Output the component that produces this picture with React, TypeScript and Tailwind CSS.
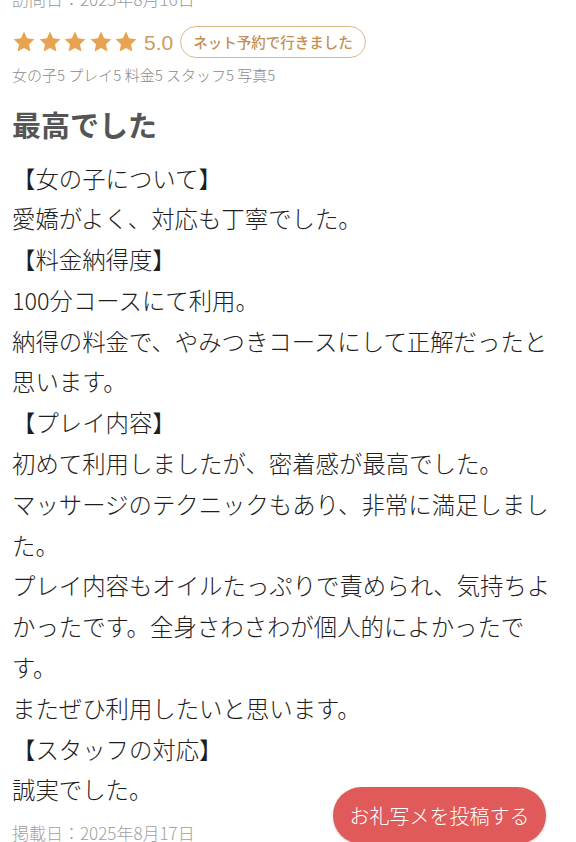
import React from "react";

const Star = () => (
  <svg width="24" height="24" viewBox="0 0 24 24" className="shrink-0">
    <path
      d="M12 1.6l3.1 6.7 7.3.9-5.4 5 1.4 7.2L12 17.9l-6.4 3.5 1.4-7.2-5.4-5 7.3-.9z"
      fill="#e8a352"
    />
  </svg>
);

const lines = [
  "【女の子について】",
  "愛嬌がよく、対応も丁寧でした。",
  "【料金納得度】",
  "100分コースにて利用。",
  "納得の料金で、やみつきコースにして正解だったと思います。",
  "【プレイ内容】",
  "初めて利用しましたが、密着感が最高でした。",
  "マッサージのテクニックもあり、非常に満足しました。",
  "プレイ内容もオイルたっぷりで責められ、気持ちよかったです。全身さわさわが個人的によかったです。",
  "またぜひ利用したいと思います。",
  "【スタッフの対応】",
  "誠実でした。",
];

export default function App() {
  return (
    <div
      className="relative w-[576px] h-[842px] overflow-hidden bg-white"
      style={{ fontFamily: '"Noto Sans CJK JP", "Noto Sans", sans-serif' }}
    >
      <div className="px-3 -mt-[11.5px] flex flex-col">
        <div className="text-[17px] leading-[20px] font-light text-[#9a9a9a]">訪問日：2025年8月16日</div>
        <div className="mt-[17.5px] flex items-center h-[32px]">
          <div className="flex items-center gap-[1.5px]">
            <Star />
            <Star />
            <Star />
            <Star />
            <Star />
          </div>
          <span
            className="ml-[6px] text-[21px] leading-none text-[#cf9a5e]"
            style={{ fontFamily: '"Liberation Sans", sans-serif' }}
          >
            5.0
          </span>
          <span className="ml-[7px] h-[32px] px-[12px] flex items-center rounded-full border-[1.5px] border-[#dcb98d] text-[14.5px] font-medium text-[#c48f55]">
            ネット予約で行きました
          </span>
        </div>
        <div className="mt-[7px] text-[15px] leading-[20px] font-light text-[#8a8a8a]">
          女の子5 プレイ5 料金5 スタッフ5 写真5
        </div>
        <h1 className="mt-[21px] text-[29px] leading-[36px] font-bold text-[#555555]">最高でした</h1>
        <div className="mt-[15.5px] text-[23.4px] leading-[40.8px] font-light text-[#1e1e1e]">
          {lines.map((l, i) => (
            <p key={i}>{l}</p>
          ))}
        </div>
        <div className="mt-[11.5px] text-[17px] leading-[22px] font-light text-[#a0a0a0]">掲載日：2025年8月17日</div>
      </div>
      <button className="absolute right-[30px] top-[787px] w-[213px] h-[57px] rounded-full bg-[#e05a5a] text-white text-[20px] font-light shadow-[0_1px_3px_rgba(0,0,0,0.2)]">
        お礼写メを投稿する
      </button>
    </div>
  );
}
